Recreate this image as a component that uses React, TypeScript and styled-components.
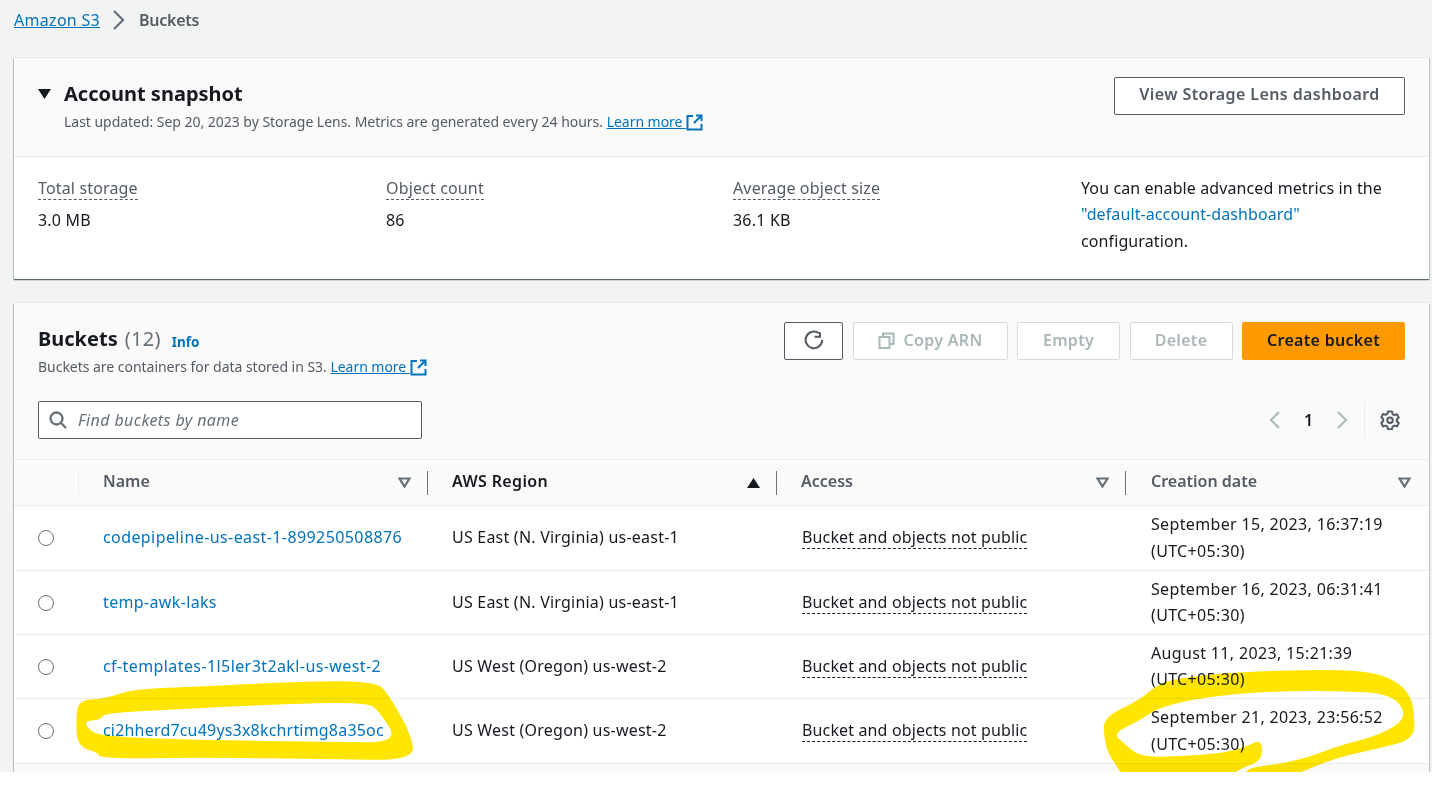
import React from "react";
import styled, { createGlobalStyle } from "styled-components";

const Global = createGlobalStyle`
  html, body { margin: 0; padding: 0; background: #fff; }
  body { font-family: "Noto Sans", "Open Sans", sans-serif; color: #16191f; overflow: hidden; }
`;
const Stage = styled.div`position: relative; width: 1432px; height: 788px; overflow: hidden; background: #fff;`;
const Page = styled.div`
  height: 772px; box-sizing: border-box; background: #f2f3f3; padding: 0 3px 0 14px; overflow: hidden;
  display: flex; flex-direction: column;
`;
const Crumbs = styled.nav`height: 58px; padding-bottom: 18px; box-sizing: border-box; display: flex; align-items: center; gap: 12px; font-size: 16px; line-height: 20px;`;
const CrumbLink = styled.a`color: #0073bb; text-decoration: underline; letter-spacing: .3px;`;
const CrumbCurrent = styled.span`color: #545b64; font-weight: 600; margin-left: 2px; letter-spacing: -.25px;`;
const Card = styled.section`
  background: #fff; box-shadow: 0 1px 1px 0 rgba(0,28,36,.5), 1px 1px 1px 0 rgba(0,28,36,.15), -1px 1px 1px 0 rgba(0,28,36,.15), 0 -1px 0 0 rgba(0,28,36,.05);
  flex: none;
`;
const SnapshotHead = styled.header`
  height: 99px; box-sizing: border-box; background: #fafafa; border-bottom: 1px solid #eaeded;
  padding: 19px 24px 0 24px; display: flex; justify-content: space-between; align-items: flex-start;
`;
const TitleRow = styled.div`display: flex; align-items: center; gap: 12px; height: 34px;`;
const Caret = styled.svg`flex: none; display: block;`;
const SnapTitle = styled.h2`margin: 0; font-size: 20px; font-weight: 700; line-height: 34px; color: #16191f; letter-spacing: 0;`;
const SubText = styled.p<{ $indent?: number; $lift?: number }>`
  margin: ${p => -(p.$lift ?? 0)}px 0 0 ${p => p.$indent ?? 0}px; font-size: 14px; line-height: 22px; color: #545b64; display: flex; align-items: center; white-space: pre; letter-spacing: -.03px;
`;
const LearnLink = styled.a`color: #0073bb; text-decoration: underline; display: inline-flex; align-items: center; gap: 0; white-space: pre;`;
const OutlineButton = styled.button`
  width: 291px; height: 38px; box-sizing: border-box; background: #fff; border: 1px solid #545b64; border-radius: 2px; padding: 0 0 5px;
  color: #545b64; font: 600 16px/20px "Noto Sans", sans-serif; letter-spacing: .4px;
`;
const Metrics = styled.div`
  height: 122px; box-sizing: border-box; padding: 20px 24px 0; display: grid; grid-template-columns: 348px 347px 348px 1fr;
`;
const MetricLabel = styled.div`
  display: inline-block; font-size: 16px; line-height: 23px; color: #545b64; border-bottom: 1px dashed #545b64; height: 22px; letter-spacing: .15px;
`;
const MetricValue = styled.div`font-size: 16px; line-height: 22px; margin-top: 9px; color: #16191f; letter-spacing: .2px;`;
const Note = styled.div`font-size: 16px; line-height: 26.5px; color: #16191f; margin-top: -2.4px; letter-spacing: .1px;`;
const PlainLink = styled.a`color: #0073bb;`;
const BucketCard = styled(Card)`margin-top: 24px; flex: 1 0 auto; background: #fafafa;`;
const BucketHead = styled.header`height: 157px; box-sizing: border-box; padding: 19px 24px 0; display: flex; flex-direction: column; border-bottom: 1px solid #eaeded;`;
const TopLine = styled.div`display: flex; justify-content: space-between;`;
const HeadText = styled.div``;
const BucketsTitle = styled.h2`margin: 0; font-size: 20px; line-height: 34px; font-weight: 700; color: #16191f; display: flex; align-items: baseline; gap: 7px; letter-spacing: 0;`;
const Count = styled.span`font-weight: 400; color: #687078; letter-spacing: .3px;`;
const InfoLink = styled.a`font-size: 13.500px; font-weight: 700; color: #0073bb; margin-left: 4px; letter-spacing: 0; position: relative; top: 1px;`;
const Actions = styled.div`display: flex; gap: 9.500px;`;
const ActionBtn = styled.button<{ $w: number; $kind?: "refresh" | "disabled" | "primary" }>`
  width: ${p => p.$w}px; height: 38px; box-sizing: border-box; border-radius: 2px; display: flex; align-items: center; justify-content: center; gap: 9px;
  font: 600 16px/20px "Noto Sans", sans-serif; letter-spacing: .3px; padding: 0 0 2px;
  background: ${p => (p.$kind === "primary" ? "#ff9900" : "#fff")};
  color: ${p => (p.$kind === "primary" ? "#16191f" : "#aab7b8")};
  border: 1px solid ${p => (p.$kind === "primary" ? "#ff9900" : p.$kind === "refresh" ? "#545b64" : "#d5dbdb")};
`;
const SecondLine = styled.div`display: flex; justify-content: space-between; align-items: center; margin-top: 23px; height: 38px;`;
const Search = styled.div`
  width: 384px; height: 38px; box-sizing: border-box; background: #fff; border: 1px solid #545b64; border-radius: 2px; display: flex; align-items: center; gap: 11px; padding-left: 10px;
  font-style: italic; font-size: 16px; color: #687078; letter-spacing: .4px;
`;
const Pager = styled.div`display: flex; align-items: center; height: 38px;`;
const PageNo = styled.span`font-size: 16px; font-weight: 600; width: 53px; text-align: center; color: #16191f;`;
const PagerGear = styled.div`height: 38px; border-left: 1px solid #eaeded; margin-left: 15px; padding-left: 15px; display: flex; align-items: center; padding-right: 5px;`;
const Row = styled.div<{ $h: number; $head?: boolean }>`
  display: grid; grid-template-columns: 65px 349px 349px 349px 303px; height: ${p => p.$h}px; box-sizing: border-box; border-bottom: 1px solid #eaeded;
  background: ${p => (p.$head ? "#fafafa" : "#fff")};
`;
const HeadCell = styled.div`
  display: flex; align-items: center; justify-content: space-between; padding: 0 16px 0 24px; font-size: 16px; font-weight: 600; color: #545b64;
  span { position: relative; top: -2px; }
`;
const RegionHead = styled(HeadCell)`color: #16191f; span { letter-spacing: .35px; }`;
const LastHead = styled(HeadCell)`padding: 0 17px 0 25px;`;
const Sep = styled.div<{ $c?: string }>`width: 1px; height: 24px; background: ${p => p.$c ?? "#687078"}; justify-self: end; align-self: center;`;
const HeadWrap = styled.div`display: grid; grid-template-columns: 1fr 1px; align-items: center;`;
const Cell = styled.div<{ $ls: number }>`display: flex; align-items: center; padding: 0 0 2px 24px; font-size: 16px; color: #16191f; letter-spacing: ${p => p.$ls}px;`;
const RadioCell = styled.div`display: flex; align-items: center; padding-left: 24px;`;
const Radio = styled.span`width: 14px; height: 14px; border: 1.500px solid #687078; border-radius: 50%; background: #fff;`;
const NameLink = styled.a`color: #0073bb;`;
const Dotted = styled.span`border-bottom: 1px dashed #16191f; line-height: 21px; color: #16191f; margin: 2px 0 0 1px;`;
const DateCell = styled.div`padding: 0 0 1px 25px; font-size: 16px; line-height: 26.500px; color: #16191f; display: flex; flex-direction: column; justify-content: center; letter-spacing: .34px;`;
const Highlight = styled.svg<{ $x: number; $w: number }>`
  position: absolute; left: ${p => p.$x}px; top: 640px; width: ${p => p.$w}px; height: 132px; mix-blend-mode: multiply; pointer-events: none;
  path { fill: #ffe500; stroke: #ffe500; stroke-width: 5px; stroke-linejoin: round; fill-rule: evenodd; }
`;

const ExternalIcon = () => (
  <svg width="17" height="17" viewBox="0 0 17 17" fill="none" stroke="#0073bb" strokeWidth="2" style={{ display: "block" }}>
    <path d="M7 2H1.500v13.500h14V10" />
    <path d="M10 1.500h5.500V7M15.500 1.500 8 9" />
  </svg>
);
const Refresh = () => (
  <svg width="22" height="22" viewBox="0 0 22 22" fill="none" stroke="#545b64" strokeWidth="2">
    <path d="M16 4.300A8.300 8.300 0 1 0 19.200 11" />
    <path d="M11.500 3.600h5.500V-1" transform="translate(0 4.200)" />
  </svg>
);
const CopyIcon = () => (
  <svg width="17" height="17" viewBox="0 0 17 17" fill="none" stroke="#aab7b8" strokeWidth="2">
    <rect x="1.500" y="5" width="10" height="11" />
    <path d="M5 4V1.500h10.500V12H12" />
  </svg>
);
const SearchIcon = () => (
  <svg width="18" height="18" viewBox="0 0 18 18" fill="none" stroke="#687078" strokeWidth="2.300">
    <circle cx="7.500" cy="7.500" r="6" />
    <path d="m12 12 5 5" />
  </svg>
);
const Chevron = ({ left }: { left?: boolean }) => (
  <svg width="14" height="20" viewBox="0 0 14 20" fill="none" stroke="#aab7b8" strokeWidth="2">
    <path d={left ? "M11 2 3 10l8 8" : "M3 2l8 8-8 8"} />
  </svg>
);
const Gear = () => (
  <svg width="20" height="20" viewBox="0 0 20 20" fill="none" stroke="#545b64" strokeWidth="2" strokeLinejoin="round">
    <path d="M8 1.500h4l.6 2.600 1.700 1 2.600-.8 1.800 3.300-1.900 1.800v1.900l1.900 1.800-1.800 3.300-2.600-.8-1.700 1-.6 2.600H8l-.6-2.600-1.700-1-2.600.8-1.800-3.300L3.200 11v-1.900L1.300 7.300l1.800-3.300 2.600.8 1.700-1z" />
    <circle cx="10" cy="10.200" r="2.700" />
  </svg>
);
const SortDown = () => (
  <svg width="13" height="11" viewBox="0 0 13 11" fill="none" stroke="#687078" strokeWidth="2.200"><path d="M1.500 1.500h10l-5 8z" /></svg>
);
const SortUp = () => (
  <svg width="13" height="10" viewBox="0 0 13 10" fill="#16191f"><path d="M6.500 0 13 10H0z" /></svg>
);

// Turns the points of a hand-drawn marker contour into a smooth closed curve.
const smooth = (pts: number[][]) => {
  const mid = (a: number[], b: number[]) => `${(a[0] + b[0]) / 2} ${(a[1] + b[1]) / 2}`;
  let d = `M${mid(pts[pts.length - 1], pts[0])}`;
  pts.forEach((p, i) => { d += `Q${p[0]} ${p[1]} ${mid(p, pts[(i + 1) % pts.length])}`; });
  return d + "Z";
};

const nameOuter = [[236,182],[310,180],[400,150],[600,142],[900,127],[1125,126],[1165,165],[1236,295],[1236,358],[1000,355],[600,350],[300,354],[296,335],[236,318],[230,250]];
const nameInner = [[252,240],[262,268],[302,292],[600,303],[1000,308],[1200,310],[1140,212],[1100,183],[800,192],[500,207],[312,217],[300,238]];
const dateStroke = [[74,232],[180,183],[240,130],[330,112],[500,97],[700,92],[855,94],[945,122],[990,168],[1002,230],[998,296],[900,322],[780,348],[700,378],[600,420],[498,420],[498,386],[600,375],[700,350],[780,318],[900,288],[978,240],[965,190],[920,162],[850,152],[650,150],[480,157],[330,177],[230,203],[180,238],[96,280],[130,312],[180,354],[300,352],[430,342],[500,322],[544,300],[544,362],[480,382],[420,430],[150,430],[88,345],[74,290]];

const rows = [
  { h: 65, nameLs: 0.41, name: "codepipeline-us-east-1-899250508876", region: "US East (N. Virginia) us-east-1", date: "September 15, 2023, 16:37:19" },
  { h: 64, nameLs: 0.35, name: "temp-awk-laks", region: "US East (N. Virginia) us-east-1", date: "September 16, 2023, 06:31:41" },
  { h: 64, nameLs: 0.41, name: "cf-templates-1l5ler3t2akl-us-west-2", region: "US West (Oregon) us-west-2", date: "August 11, 2023, 15:21:39" },
  { h: 65, nameLs: 0.19, name: "ci2hherd7cu49ys3x8kchrtimg8a35oc", region: "US West (Oregon) us-west-2", date: "September 21, 2023, 23:56:52" },
];

export default function App() {
  return (
    <Stage>
      <Global />
      <Page>
        <Crumbs>
          <CrumbLink>Amazon S3</CrumbLink>
          <svg width="13" height="20" viewBox="0 0 13 20" fill="none" stroke="#687078" strokeWidth="2.200"><path d="m2 1 9 9-9 9" /></svg>
          <CrumbCurrent>Buckets</CrumbCurrent>
        </Crumbs>
        <Card>
          <SnapshotHead>
            <div>
              <TitleRow>
                <Caret width="14" height="10" viewBox="0 0 14 10" fill="#16191f"><path d="M0 0h13L6.500 10z" /></Caret>
                <SnapTitle>Account snapshot</SnapTitle>
              </TitleRow>
              <SubText $indent={26}>
                {"Last updated: Sep 20, 2023 by Storage Lens. Metrics are generated every 24 hours. "}
                <LearnLink>{"Learn more "}<ExternalIcon /></LearnLink>
              </SubText>
            </div>
            <OutlineButton>View Storage Lens dashboard</OutlineButton>
          </SnapshotHead>
          <Metrics>
            <div><MetricLabel>Total storage</MetricLabel><MetricValue>3.0 MB</MetricValue></div>
            <div><MetricLabel>Object count</MetricLabel><MetricValue>86</MetricValue></div>
            <div><MetricLabel>Average object size</MetricLabel><MetricValue>36.1 KB</MetricValue></div>
            <Note>You can enable advanced metrics in the<br /><PlainLink>"default-account-dashboard"</PlainLink><br />configuration.</Note>
          </Metrics>
        </Card>
        <BucketCard>
          <BucketHead>
            <TopLine>
              <HeadText>
                <BucketsTitle>Buckets <Count>(12)</Count><InfoLink>Info</InfoLink></BucketsTitle>
                <SubText $lift={2}>
                  {"Buckets are containers for data stored in S3. "}
                  <LearnLink>{"Learn more "}<ExternalIcon /></LearnLink>
                </SubText>
              </HeadText>
              <Actions>
                <ActionBtn $w={59} $kind="refresh"><Refresh /></ActionBtn>
                <ActionBtn $w={155} $kind="disabled"><CopyIcon />Copy ARN</ActionBtn>
                <ActionBtn $w={103} $kind="disabled">Empty</ActionBtn>
                <ActionBtn $w={103} $kind="disabled">Delete</ActionBtn>
                <ActionBtn $w={163} $kind="primary">Create bucket</ActionBtn>
              </Actions>
            </TopLine>
            <SecondLine>
              <Search><SearchIcon />Find buckets by name</Search>
              <Pager>
                <Chevron left />
                <PageNo>1</PageNo>
                <Chevron />
                <PagerGear><Gear /></PagerGear>
              </Pager>
            </SecondLine>
          </BucketHead>
          <Row $h={46} $head>
            <HeadWrap><i /><Sep $c="#eaeded" /></HeadWrap>
            <HeadWrap><HeadCell><span>Name</span><SortDown /></HeadCell><Sep /></HeadWrap>
            <HeadWrap><RegionHead><span>AWS Region</span><SortUp /></RegionHead><Sep /></HeadWrap>
            <HeadWrap><HeadCell><span>Access</span><SortDown /></HeadCell><Sep /></HeadWrap>
            <HeadWrap><LastHead><span>Creation date</span><SortDown /></LastHead><i /></HeadWrap>
          </Row>
          {rows.map(r => (
            <Row key={r.name} $h={r.h}>
              <RadioCell><Radio /></RadioCell>
              <Cell $ls={r.nameLs}><NameLink>{r.name}</NameLink></Cell>
              <Cell $ls={0.22}>{r.region}</Cell>
              <Cell $ls={0.14}><Dotted>Bucket and objects not public</Dotted></Cell>
              <DateCell><span>{r.date}</span><span>(UTC+05:30)</span></DateCell>
            </Row>
          ))}
        </BucketCard>
      </Page>
      <Highlight $x={0} $w={440} viewBox="0 0 1320 396">
        <path d={smooth(nameOuter) + smooth(nameInner)} />
      </Highlight>
      <Highlight $x={1080} $w={352} viewBox="0 0 1056 396">
        <path d={smooth(dateStroke)} />
      </Highlight>
    </Stage>
  );
}
